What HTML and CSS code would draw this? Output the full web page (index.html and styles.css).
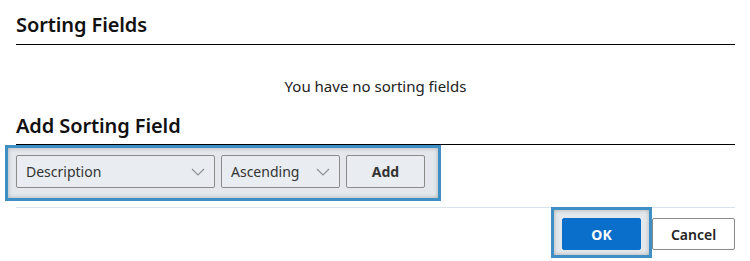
FILE: index.html
```html
<!DOCTYPE html>
<html>
<head>
<meta charset="utf-8">
<link rel="stylesheet" href="styles.css">
</head>
<body>
<div class="page">
  <h2 class="section-title first">Sorting Fields</h2>
  <p class="empty">You have no sorting fields</p>
  <h2 class="section-title second">Add Sorting Field</h2>
  <div class="highlight add-row">
    <div class="select field">
      <span>Description</span>
      <svg class="chev" width="14" height="8" viewBox="0 0 14 8"><path d="M1 1 L7 7 L13 1" fill="none" stroke="#8a8f96" stroke-width="1.1"/></svg>
    </div>
    <div class="select order">
      <span>Ascending</span>
      <svg class="chev" width="14" height="8" viewBox="0 0 14 8"><path d="M1 1 L7 7 L13 1" fill="none" stroke="#8a8f96" stroke-width="1.1"/></svg>
    </div>
    <button class="btn add">Add</button>
  </div>
  <div class="separator"></div>
  <div class="footer">
    <div class="highlight ok-wrap">
      <button class="btn primary">OK</button>
    </div>
    <button class="btn cancel">Cancel</button>
  </div>
</div>
</body>
</html>
```

FILE: styles.css
```css
html, body {
  margin: 0;
  padding: 0;
  background: #ffffff;
}
body {
  font-family: "Noto Sans", "Open Sans", "Liberation Sans", sans-serif;
  color: #222;
  width: 750px;
  height: 261px;
  overflow: hidden;
}
.page {
  padding: 0 15px 0 16px;
}
.section-title {
  margin: 0;
  font-size: 20px;
  font-weight: 600;
  line-height: 26px;
  color: #111;
  border-bottom: 1px solid #000;
  letter-spacing: -0.1px;
}
.section-title.first {
  padding-top: 12px;
  padding-bottom: 6px;
}
.section-title.second {
  padding-top: 0;
  padding-bottom: 5px;
}
.empty {
  margin: 0;
  padding: 31px 0 17px;
  text-align: center;
  font-size: 15px;
  line-height: 20px;
  color: #222;
}
.highlight {
  border: 3px solid #3e8fc3;
  background: #e4e7eb;
  box-shadow: inset 0 0 4px rgba(0,0,0,0.25);
}
.add-row {
  display: flex;
  gap: 6px;
  width: fit-content;
  margin-left: -11px;
  padding: 7px 13px 10px 8px;
}
.select {
  box-sizing: border-box;
  height: 33px;
  display: flex;
  align-items: center;
  justify-content: space-between;
  padding: 0 9px 0 9px;
  background: #e9edf1;
  border: 1px solid #8b8b8b;
  border-radius: 2px;
  font-size: 14px;
  color: #333;
}
.select.field { width: 199px; }
.select.order { width: 119px; }
.btn {
  box-sizing: border-box;
  font-family: "Noto Sans", "Open Sans", "Liberation Sans", sans-serif;
  font-size: 14px;
  border-radius: 2px;
  cursor: pointer;
}
.btn.add {
  width: 79px;
  height: 33px;
  background: #e9edf1;
  border: 1px solid #8b8b8b;
  font-weight: 700;
  color: #333;
}
.separator {
  height: 1px;
  background: #d9e4ef;
  margin-top: 6px;
}
.footer {
  display: flex;
  justify-content: flex-end;
  align-items: flex-start;
}
.ok-wrap {
  margin-top: -1px;
  padding: 8px 8px 5px 8px;
}
.btn.primary {
  display: block;
  width: 79px;
  height: 32px;
  background: #0a6ecb;
  border: 1px solid #0a6ecb;
  color: #fff;
  font-weight: 700;
}
.btn.cancel {
  margin-top: 10px;
  width: 83px;
  height: 32px;
  background: #fff;
  border: 1px solid #8b8b8b;
  color: #222;
  font-weight: 600;
}
```
